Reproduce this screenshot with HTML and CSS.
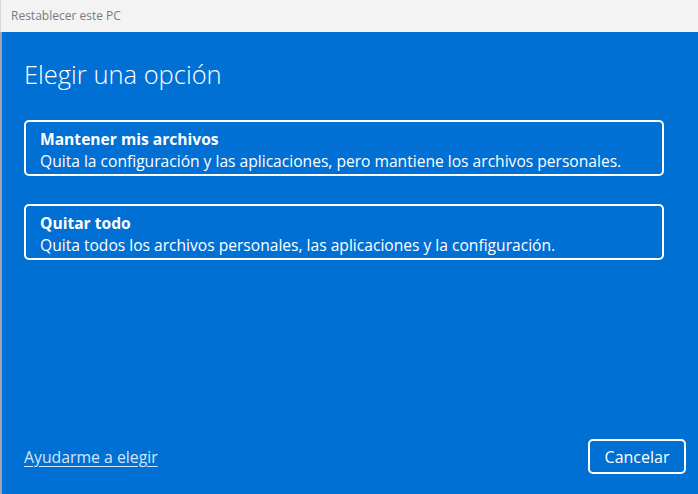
FILE: index.html
```html
<!DOCTYPE html>
<html lang="es">
<head>
<meta charset="utf-8">
<title>Restablecer este PC</title>
<link rel="stylesheet" href="styles.css">
</head>
<body>
<div class="window">
  <div class="titlebar">Restablecer este PC</div>
  <div class="content">
    <h1 class="heading">Elegir una opción</h1>
    <div class="options">
      <div class="option">
        <div class="option-title">Mantener mis archivos</div>
        <div class="option-desc">Quita la configuración y las aplicaciones, pero mantiene los archivos personales.</div>
      </div>
      <div class="option">
        <div class="option-title">Quitar todo</div>
        <div class="option-desc">Quita todos los archivos personales, las aplicaciones y la configuración.</div>
      </div>
    </div>
    <div class="footer">
      <a class="help" href="#">Ayudarme a elegir</a>
      <button class="cancel">Cancelar</button>
    </div>
  </div>
</div>
</body>
</html>
```
FILE: styles.css
```css
* { box-sizing: border-box; }
html, body { margin: 0; padding: 0; height: 100%; }
body { font-family: "Open Sans", "Noto Sans", sans-serif; overflow: hidden; }
.window { display: flex; flex-direction: column; height: 494px; width: 698px; }
.titlebar {
  height: 32px; background: #f3f3f3; color: #7a7a7a;
  font-size: 12px; padding: 7px 0 0 10px; line-height: 18px;
  border-left: 1px solid #d6d6d6;
}
.content {
  flex: 1; background: #0170d4; color: #fff;
  border-left: 2px solid #9aa6b2;
  padding: 0 12px 20px 22px;
  display: flex; flex-direction: column;
}
.heading {
  margin: 26px 0 0 0; font-weight: 300; font-size: 25.5px; line-height: 32px;
}
.options { display: flex; flex-direction: column; gap: 28px; margin-top: 30px; width: 640px; }
.option {
  border: 2px solid #fff; border-radius: 5px; height: 56px;
  padding: 6px 14px 0 14px;
}
.option-title { font-weight: 700; font-size: 15.6px; line-height: 22px; }
.option-desc { font-size: 15.6px; line-height: 22px; }
.footer { margin-top: auto; display: flex; justify-content: space-between; align-items: center; }
.help { color: #d3e6fb; font-size: 15.8px; text-decoration: underline; text-underline-offset: 3px; }
.cancel {
  width: 98px; height: 35px; background: transparent; border: 2px solid #fff;
  border-radius: 5px; color: #fff; font-family: inherit; font-size: 16px;
}
```
